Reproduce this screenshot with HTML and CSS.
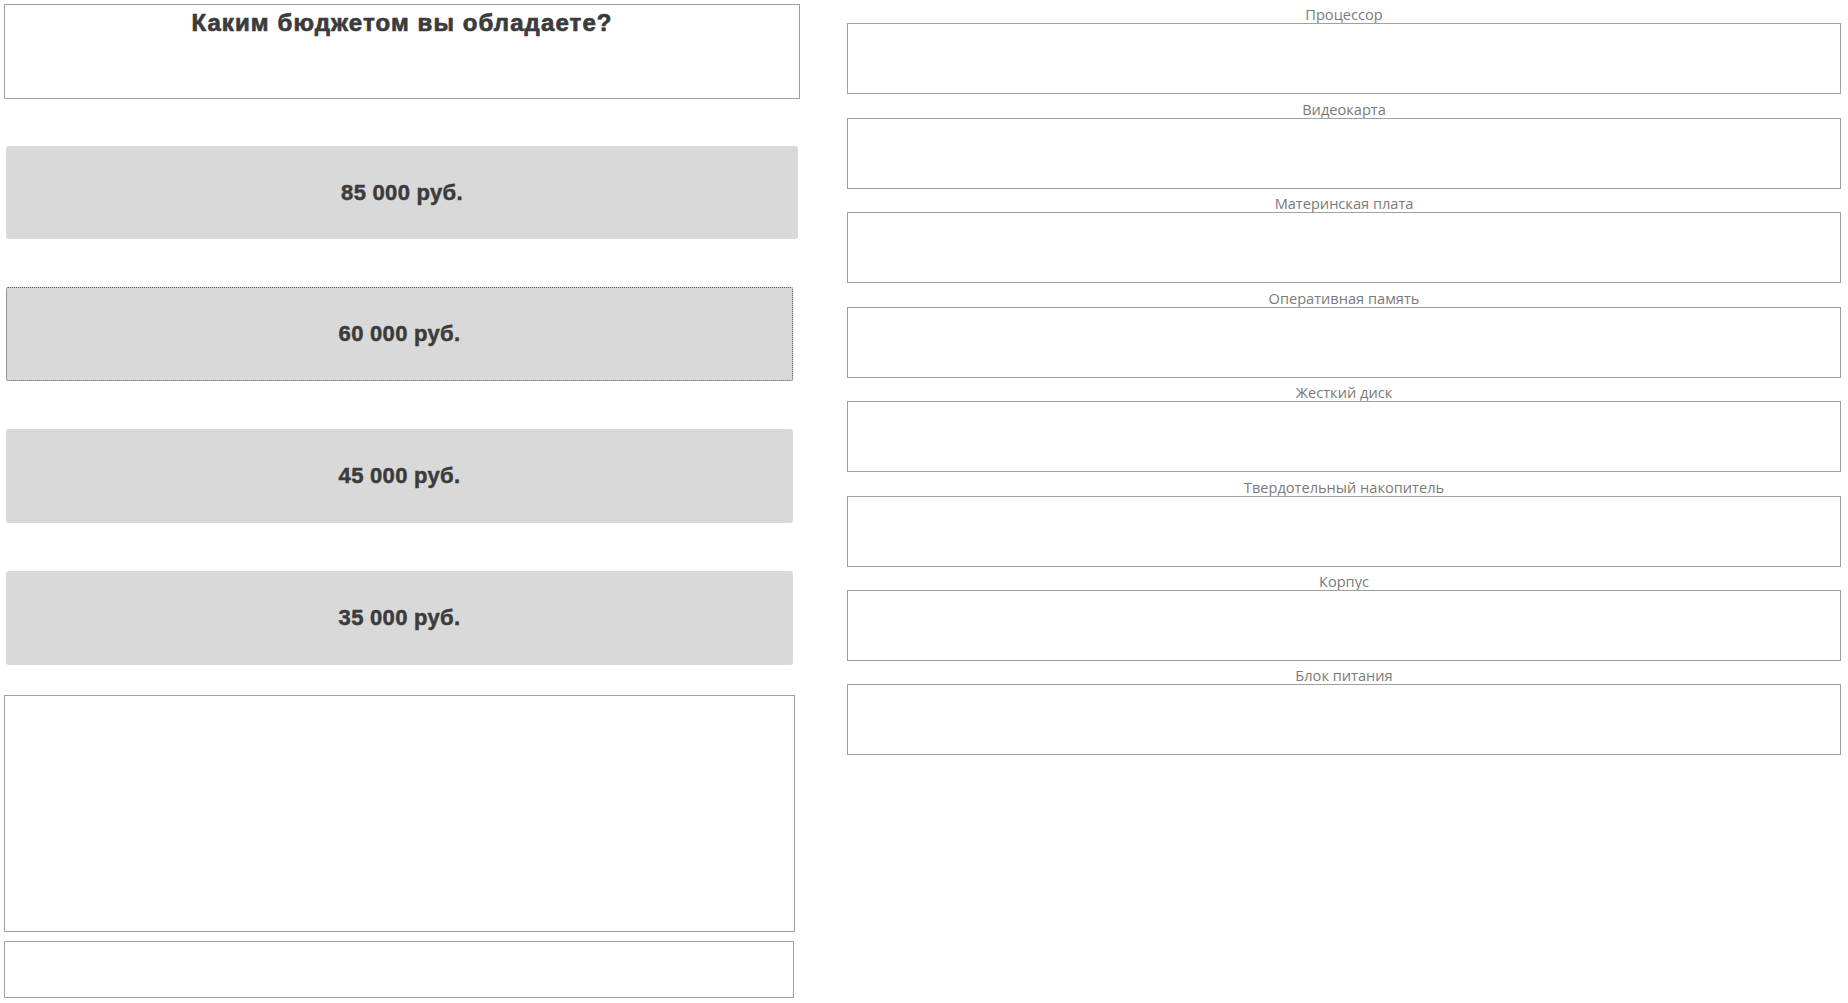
FILE: index.html
```html
<!DOCTYPE html>
<html lang="ru">
<head>
<meta charset="utf-8">
<title>Конфигуратор ПК</title>
<link rel="stylesheet" href="styles.css">
</head>
<body>
<div class="page">
  <div class="left">
    <div class="title-box"><h1 class="title">Каким бюджетом вы обладаете?</h1></div>
    <div class="btn btn-wide">85 000 руб.</div>
    <div class="btn btn-focus">60 000 руб.</div>
    <div class="btn">45 000 руб.</div>
    <div class="btn">35 000 руб.</div>
    <div class="big-box"></div>
    <div class="small-box"></div>
  </div>
  <div class="right">
    <div class="field"><div class="label">Процессор</div><div class="box"></div></div>
    <div class="field"><div class="label">Видеокарта</div><div class="box"></div></div>
    <div class="field"><div class="label">Материнская плата</div><div class="box"></div></div>
    <div class="field"><div class="label">Оперативная память</div><div class="box"></div></div>
    <div class="field"><div class="label">Жесткий диск</div><div class="box"></div></div>
    <div class="field"><div class="label">Твердотельный накопитель</div><div class="box"></div></div>
    <div class="field"><div class="label">Корпус</div><div class="box"></div></div>
    <div class="field"><div class="label">Блок питания</div><div class="box"></div></div>
  </div>
</div>
</body>
</html>
```

FILE: styles.css
```css
html, body {
  margin: 0;
  padding: 0;
  background: #ffffff;
}

.page {
  display: flex;
  align-items: flex-start;
  padding: 4px 0 0 4px;
  gap: 47px;
}

.left {
  width: 796px;
  display: flex;
  flex-direction: column;
  align-items: flex-start;
}

.title-box {
  box-sizing: border-box;
  width: 796px;
  height: 95px;
  border: 1px solid #a0a0a0;
  text-align: center;
}

.title {
  margin: 4px 0 0 0;
  font-family: "Liberation Sans", Arial, sans-serif;
  font-weight: 700;
  font-size: 24px;
  line-height: 28px;
  color: #3b3b3b;
  letter-spacing: 1.1px;
  -webkit-text-stroke: 0.7px #3b3b3b;
}

.btn {
  box-sizing: border-box;
  margin-left: 2px;
  width: 787px;
  height: 94px;
  background: #d9d9d9;
  border-radius: 3px;
  display: flex;
  align-items: center;
  justify-content: center;
  font-family: "Liberation Sans", Arial, sans-serif;
  font-weight: 700;
  font-size: 22px;
  color: #3b3b3b;
  letter-spacing: 0.3px;
  -webkit-text-stroke: 0.5px #3b3b3b;
  margin-top: 48px;
}

.btn-wide {
  width: 792px;
  height: 93px;
  margin-top: 47px;
}

.btn-focus {
  border: 1px dotted #555;
  border-radius: 2px;
}

.big-box {
  box-sizing: border-box;
  width: 791px;
  height: 237px;
  margin-top: 30px;
  border: 1px solid #a0a0a0;
}

.small-box {
  box-sizing: border-box;
  width: 790px;
  height: 57px;
  margin-top: 9px;
  border: 1px solid #a0a0a0;
}

.right {
  width: 994px;
  display: flex;
  flex-direction: column;
  margin-top: -4px;
}

.field {
  display: flex;
  flex-direction: column;
  height: 94.43px;
}

.label {
  height: 23.43px;
  display: flex;
  align-items: flex-end;
  justify-content: center;
  font-family: "Open Sans", "Noto Sans", sans-serif;
  font-size: 14.6px;
  line-height: 18px;
  color: #7a7a7a;
}

.box {
  box-sizing: border-box;
  height: 71px;
  border: 1px solid #a0a0a0;
}
```
